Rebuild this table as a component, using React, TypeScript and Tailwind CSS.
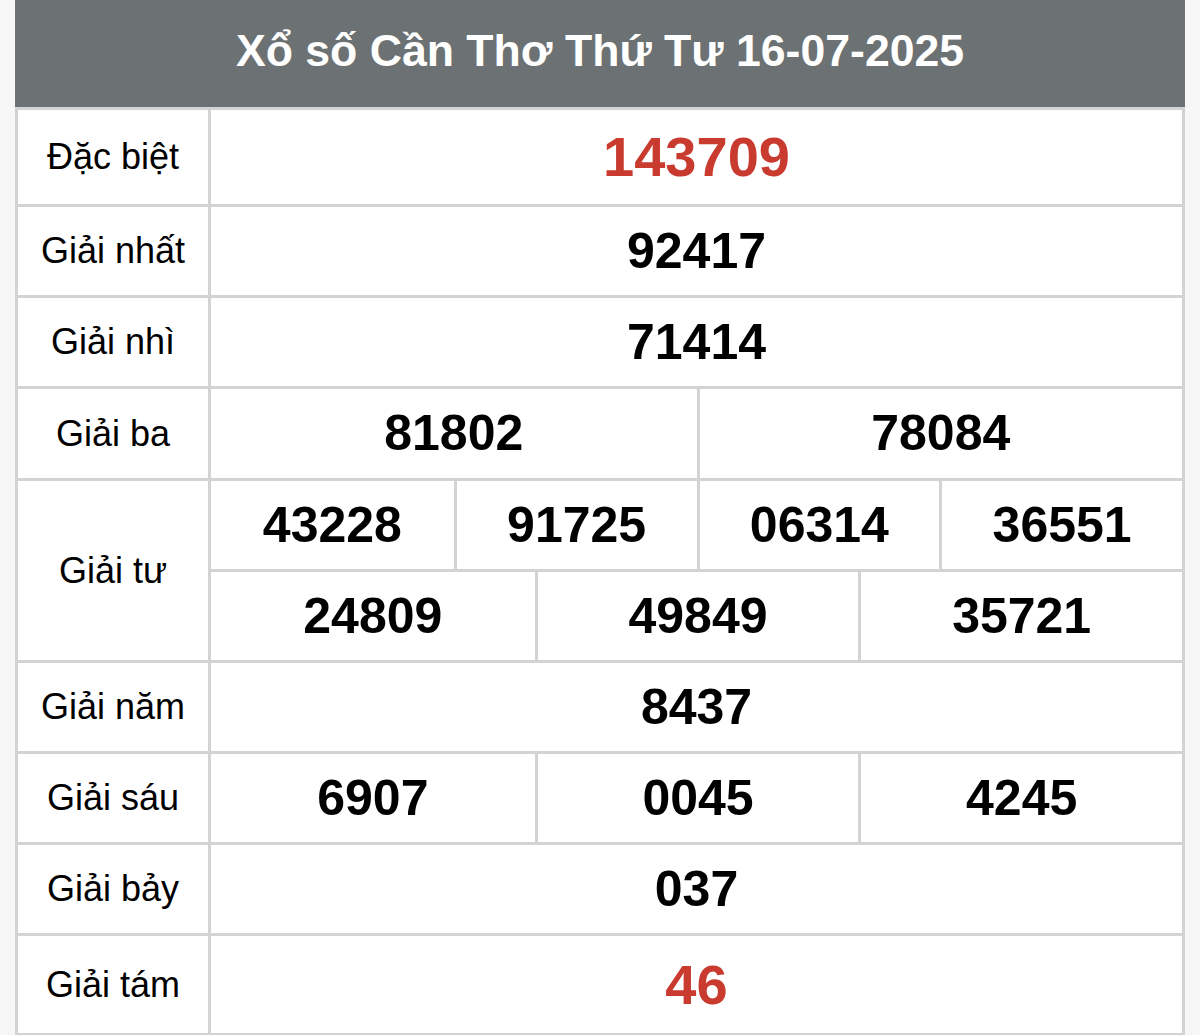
import React from 'react';

const border = 'border-[#d3d3d3]';

const Label: React.FC<{ text: string }> = ({ text }) => (
  <div className={`w-[193px] shrink-0 flex items-center justify-center border-r-[3px] ${border} text-[36px] text-black`}>
    {text}
  </div>
);

const Num: React.FC<{ value: string; red?: boolean; first?: boolean; big?: boolean }> = ({ value, red, first, big }) => (
  <div
    className={`flex items-center justify-center font-bold ${big ? 'text-[56px]' : 'text-[50px]'} ${
      red ? 'text-[#c93a2f]' : 'text-black'
    } ${first ? '' : `border-l-[3px] ${border}`}`}
  >
    {value}
  </div>
);

const App: React.FC = () => {
  return (
    <div className="min-h-[1035px] bg-[#f7f7f7] px-[15px] font-['Liberation_Sans',Arial,sans-serif]">
      <div className="h-[107px] pb-[5px] bg-[#6c7173] flex items-center justify-center text-white font-bold text-[44.6px]">
        Xổ số Cần Thơ Thứ Tư 16-07-2025
      </div>

      <div className={`bg-white border-x-[3px] border-t-[3px] ${border}`}>
        {/* Đặc biệt */}
        <div className={`flex h-[97px] border-b-[3px] ${border}`}>
          <Label text="Đặc biệt" />
          <div className="flex-1 grid grid-cols-1">
            <Num value="143709" red big first />
          </div>
        </div>

        <div className={`flex h-[91px] border-b-[3px] ${border}`}>
          <Label text="Giải nhất" />
          <div className="flex-1 grid grid-cols-1">
            <Num value="92417" first />
          </div>
        </div>

        <div className={`flex h-[91px] border-b-[3px] ${border}`}>
          <Label text="Giải nhì" />
          <div className="flex-1 grid grid-cols-1">
            <Num value="71414" first />
          </div>
        </div>

        <div className={`flex h-[92px] border-b-[3px] ${border}`}>
          <Label text="Giải ba" />
          <div className="flex-1 grid grid-cols-2">
            <Num value="81802" first />
            <Num value="78084" />
          </div>
        </div>

        {/* Giải tư */}
        <div className={`flex h-[182px] border-b-[3px] ${border}`}>
          <Label text="Giải tư" />
          <div className="flex-1 flex flex-col">
            <div className={`h-[91px] grid grid-cols-4 border-b-[3px] ${border}`}>
              <Num value="43228" first />
              <Num value="91725" />
              <Num value="06314" />
              <Num value="36551" />
            </div>
            <div className="flex-1 grid grid-cols-3">
              <Num value="24809" first />
              <Num value="49849" />
              <Num value="35721" />
            </div>
          </div>
        </div>

        <div className={`flex h-[91px] border-b-[3px] ${border}`}>
          <Label text="Giải năm" />
          <div className="flex-1 grid grid-cols-1">
            <Num value="8437" first />
          </div>
        </div>

        <div className={`flex h-[91px] border-b-[3px] ${border}`}>
          <Label text="Giải sáu" />
          <div className="flex-1 grid grid-cols-3">
            <Num value="6907" first />
            <Num value="0045" />
            <Num value="4245" />
          </div>
        </div>

        <div className={`flex h-[91px] border-b-[3px] ${border}`}>
          <Label text="Giải bảy" />
          <div className="flex-1 grid grid-cols-1">
            <Num value="037" first />
          </div>
        </div>

        <div className={`flex h-[100px] border-b-[3px] ${border}`}>
          <Label text="Giải tám" />
          <div className="flex-1 grid grid-cols-1">
            <Num value="46" red big first />
          </div>
        </div>
      </div>
    </div>
  );
};

export default App;
